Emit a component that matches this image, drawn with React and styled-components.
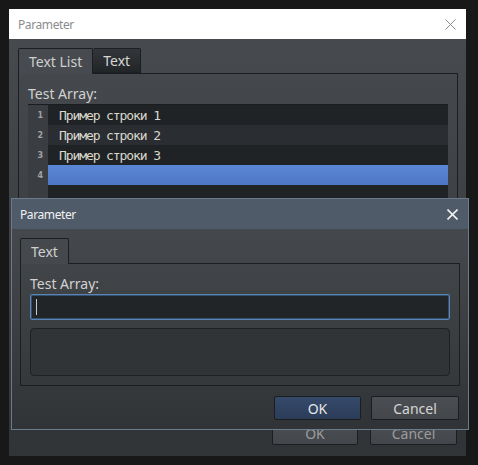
import React from "react";
import styled, { createGlobalStyle } from "styled-components";

const Global = createGlobalStyle`
  html, body { margin: 0; padding: 0; background: #181818; }
  body { font-family: "Noto Sans", "Open Sans", sans-serif; }
  * { box-sizing: border-box; }
`;

const Desktop = styled.div`
  position: relative;
  width: 478px;
  height: 465px;
  padding: 9px;
  background: #181818;
`;

const Window = styled.div`
  display: flex;
  flex-direction: column;
  width: ${(p) => p.$w}px;
  height: ${(p) => p.$h}px;
  background: linear-gradient(#484c50 0%, #3b3f42 55%, #303437 100%);
  border: ${(p) => (p.$modal ? "1px solid #6b7b8b" : "none")};
`;

const ModalLayer = styled.div`
  position: absolute;
  left: 11px;
  top: 198px;
`;

const TitleBar = styled.div`
  flex: 0 0 ${(p) => (p.$modal ? 30 : 30)}px;
  display: flex;
  align-items: center;
  justify-content: space-between;
  padding: ${(p) => (p.$modal ? "0 10px 0 8px" : "0 10px 0 9px")};
  background: ${(p) => (p.$modal ? "#4f5b69" : "#ffffff")};
  color: ${(p) => (p.$modal ? "#f2f2f2" : "#8c8c8c")};
  font-size: 12px;
  letter-spacing: -0.4px;
`;

const CloseIcon = ({ color, width }) => (
  <svg width="11" height="11" viewBox="0 0 11 11">
    <path d="M0.5 0.5 L10.5 10.5 M10.5 0.5 L0.5 10.5" stroke={color} strokeWidth={width} fill="none" />
  </svg>
);

const Body = styled.div`
  flex: 1;
  display: flex;
  flex-direction: column;
  padding: ${(p) => p.$pad};
`;

const TabBar = styled.div`
  display: flex;
  height: 25px;
`;

const Tab = styled.div`
  position: relative;
  z-index: ${(p) => (p.$active ? 2 : 1)};
  height: ${(p) => (p.$active ? 26 : 25)}px;
  padding: 0 10px;
  display: flex;
  align-items: center;
  font-size: 14px;
  color: ${(p) => (p.$active ? "#cfcfcf" : "#d6d6d6")};
  border: 1px solid #1c1f22;
  border-bottom: ${(p) => (p.$active ? "none" : "1px solid #1c1f22")};
  border-left: ${(p) => (p.$first ? "1px solid #1c1f22" : "none")};
  border-radius: 2px 2px 0 0;
  background: ${(p) =>
    p.$active ? p.$bg : "linear-gradient(#33363a, #222528)"};
`;

const Pane = styled.div`
  flex: 1;
  display: flex;
  flex-direction: column;
  border: 1px solid #1c1f22;
  padding: 11px 9px 9px 9px;
  min-height: 0;
  overflow: hidden;
`;

const Label = styled.div`
  font-size: 14px;
  line-height: 18px;
  color: #d2d2d2;
  margin-bottom: 1px;
`;

const List = styled.div`
  flex: 1;
  display: flex;
  flex-direction: column;
  background: #202326;
  border-top: 1px solid #1a1c1e;
`;

const Row = styled.div`
  display: flex;
  height: 20px;
`;

const Gutter = styled.div`
  width: 20px;
  padding-right: 5px;
  display: flex;
  align-items: center;
  justify-content: flex-end;
  background: #3a3d41;
  color: #a2a2a2;
  font-family: "DejaVu Sans", sans-serif;
  font-weight: bold;
  font-size: 8px;
`;

const Line = styled.div`
  flex: 1;
  display: flex;
  align-items: center;
  padding-left: 11px;
  font-family: "DejaVu Sans Mono", monospace;
  font-size: 13px;
  letter-spacing: -1.1px;
  color: #d9d8cc;
  background: ${(p) =>
    p.$selected
      ? "linear-gradient(#5b87d7, #4e77c3)"
      : p.$alt
      ? "#2a2d31"
      : "#202326"};
`;

const GutterFill = styled.div`
  flex: 1;
  display: flex;
  & > div:first-child {
    width: 20px;
    background: #3a3d41;
  }
`;

const Input = styled.div`
  height: 26px;
  display: flex;
  align-items: center;
  padding-left: 5px;
  background: #222528;
  border: 1px solid #5a84b4;
  box-shadow: inset 0 0 0 1px #34506f;
  border-radius: 2px;
`;

const Caret = styled.div`
  width: 1px;
  height: 16px;
  background: #c8c8c8;
`;

const TextArea = styled.div`
  height: 48px;
  margin-top: 8px;
  background: #303437;
  border: 1px solid #1e2124;
  border-radius: 4px;
`;

const ButtonRow = styled.div`
  display: flex;
  justify-content: flex-end;
  gap: ${(p) => p.$gap}px;
  margin-top: 10px;
  padding-right: 1px;
`;

const Button = styled.div`
  width: ${(p) => p.$w}px;
  height: 24px;
  display: flex;
  align-items: center;
  justify-content: center;
  font-size: 14px;
  border: 1px solid #1b1e21;
  border-radius: 2px;
  color: ${(p) => (p.$dim ? "#9c9c9c" : p.$primary ? "#e6e6e6" : "#d6d6d6")};
  background: ${(p) =>
    p.$primary
      ? "linear-gradient(#35496a, #2b3d58)"
      : "linear-gradient(#4b4f53, #43474b)"};
`;

const rows = ["Пример строки 1", "Пример строки 2", "Пример строки 3", ""];

export default function App() {
  return (
    <>
      <Global />
      <Desktop>
        <Window $w={457} $h={447}>
          <TitleBar>
            <span>Parameter</span>
            <CloseIcon color="#8a8a8a" width={1} />
          </TitleBar>
          <Body $pad="9px 8px 11px 9px">
            <TabBar>
              <Tab $active $first $bg="#474b4f">Text List</Tab>
              <Tab>Text</Tab>
            </TabBar>
            <Pane>
              <Label>Test Array:</Label>
              <List>
                {rows.map((r, i) => (
                  <Row key={i}>
                    <Gutter>{i + 1}</Gutter>
                    <Line $alt={i % 2 === 1} $selected={i === 3}>
                      {r}
                    </Line>
                  </Row>
                ))}
                <GutterFill>
                  <div />
                  <div />
                </GutterFill>
              </List>
            </Pane>
            <ButtonRow $gap={12}>
              <Button $w={86} $dim>OK</Button>
              <Button $w={87} $dim>Cancel</Button>
            </ButtonRow>
          </Body>
        </Window>
        <ModalLayer>
          <Window $w={458} $h={232} $modal>
            <TitleBar $modal>
              <span>Parameter</span>
              <CloseIcon color="#f0f0f0" width={1.6} />
            </TitleBar>
            <Body $pad="9px 8px 9px 8px">
              <TabBar>
                <Tab $active $first $bg="#45494d">Text</Tab>
              </TabBar>
              <Pane>
                <Label>Test Array:</Label>
                <Input>
                  <Caret />
                </Input>
                <TextArea />
              </Pane>
              <ButtonRow $gap={10}>
                <Button $w={87} $primary>OK</Button>
                <Button $w={88}>Cancel</Button>
              </ButtonRow>
            </Body>
          </Window>
        </ModalLayer>
      </Desktop>
    </>
  );
}
